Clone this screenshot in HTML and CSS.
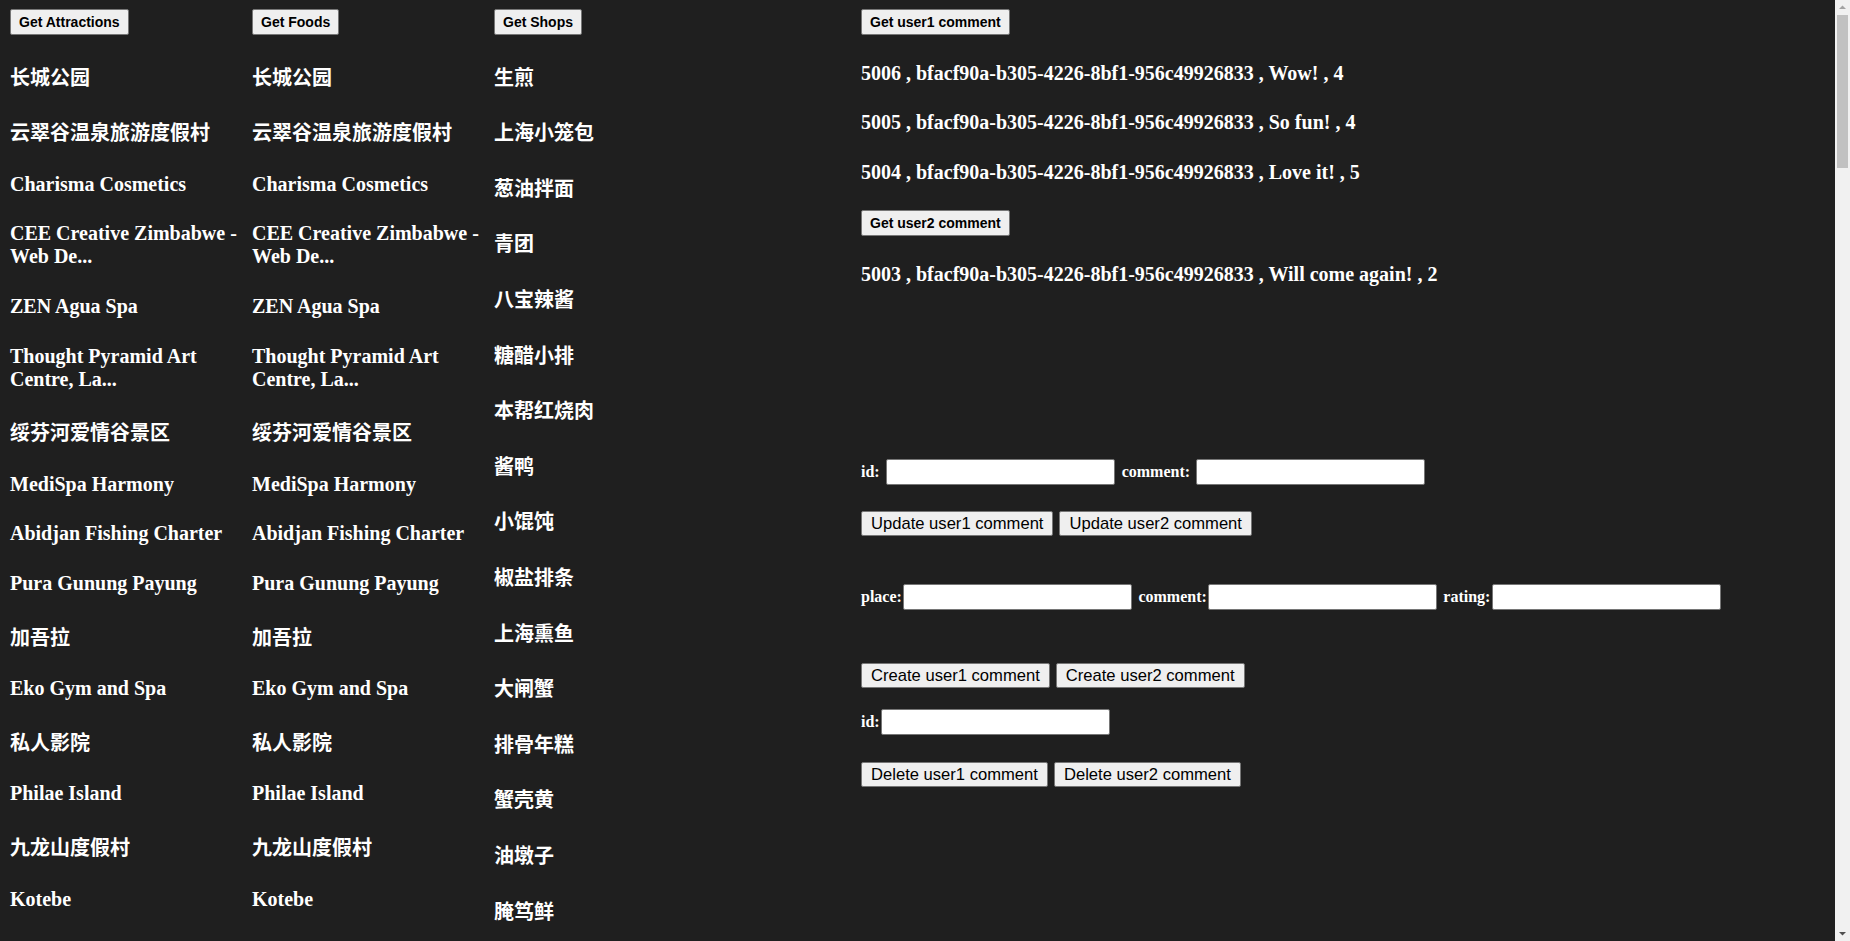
FILE: index.html
```html
<!DOCTYPE html>
<html lang="zh">
<head>
<meta charset="utf-8">
<title>Travel comments</title>
<link rel="stylesheet" href="styles.css">
</head>
<body>
<div class="page">
  <section class="column">
    <div class="bar"><button class="get-btn">Get Attractions</button></div>
    <h4 class="item">长城公园</h4>
    <h4 class="item">云翠谷温泉旅游度假村</h4>
    <h4 class="item">Charisma Cosmetics</h4>
    <h4 class="item">CEE Creative Zimbabwe - Web De...</h4>
    <h4 class="item">ZEN Agua Spa</h4>
    <h4 class="item">Thought Pyramid Art Centre, La...</h4>
    <h4 class="item">绥芬河爱情谷景区</h4>
    <h4 class="item">MediSpa Harmony</h4>
    <h4 class="item">Abidjan Fishing Charter</h4>
    <h4 class="item">Pura Gunung Payung</h4>
    <h4 class="item">加吾拉</h4>
    <h4 class="item">Eko Gym and Spa</h4>
    <h4 class="item">私人影院</h4>
    <h4 class="item">Philae Island</h4>
    <h4 class="item">九龙山度假村</h4>
    <h4 class="item">Kotebe</h4>
  </section>
  <section class="column">
    <div class="bar"><button class="get-btn">Get Foods</button></div>
    <h4 class="item">长城公园</h4>
    <h4 class="item">云翠谷温泉旅游度假村</h4>
    <h4 class="item">Charisma Cosmetics</h4>
    <h4 class="item">CEE Creative Zimbabwe - Web De...</h4>
    <h4 class="item">ZEN Agua Spa</h4>
    <h4 class="item">Thought Pyramid Art Centre, La...</h4>
    <h4 class="item">绥芬河爱情谷景区</h4>
    <h4 class="item">MediSpa Harmony</h4>
    <h4 class="item">Abidjan Fishing Charter</h4>
    <h4 class="item">Pura Gunung Payung</h4>
    <h4 class="item">加吾拉</h4>
    <h4 class="item">Eko Gym and Spa</h4>
    <h4 class="item">私人影院</h4>
    <h4 class="item">Philae Island</h4>
    <h4 class="item">九龙山度假村</h4>
    <h4 class="item">Kotebe</h4>
  </section>
  <section class="column">
    <div class="bar"><button class="get-btn">Get Shops</button></div>
    <h4 class="item">生煎</h4>
    <h4 class="item">上海小笼包</h4>
    <h4 class="item">葱油拌面</h4>
    <h4 class="item">青团</h4>
    <h4 class="item">八宝辣酱</h4>
    <h4 class="item">糖醋小排</h4>
    <h4 class="item">本帮红烧肉</h4>
    <h4 class="item">酱鸭</h4>
    <h4 class="item">小馄饨</h4>
    <h4 class="item">椒盐排条</h4>
    <h4 class="item">上海熏鱼</h4>
    <h4 class="item">大闸蟹</h4>
    <h4 class="item">排骨年糕</h4>
    <h4 class="item">蟹壳黄</h4>
    <h4 class="item">油墩子</h4>
    <h4 class="item">腌笃鲜</h4>
  </section>
  <section class="comments">
    <div class="bar"><button class="get-btn">Get user1 comment</button></div>
    <h4 class="item">5006 , bfacf90a-b305-4226-8bf1-956c49926833 , Wow! , 4</h4>
    <h4 class="item">5005 , bfacf90a-b305-4226-8bf1-956c49926833 , So fun! , 4</h4>
    <h4 class="item">5004 , bfacf90a-b305-4226-8bf1-956c49926833 , Love it! , 5</h4>
    <div class="bar"><button class="get-btn">Get user2 comment</button></div>
    <h4 class="item">5003 , bfacf90a-b305-4226-8bf1-956c49926833 , Will come again! , 2</h4>

    <div class="editor">
      <div class="field-row spaced">
        <label class="lbl">id:</label><input class="txt" type="text">
        <label class="lbl">comment:</label><input class="txt" type="text">
      </div>
      <div class="btn-row after-update-fields">
        <button class="act-btn">Update user1 comment</button>
        <button class="act-btn">Update user2 comment</button>
      </div>
      <div class="field-row tight after-update-btns">
        <label class="lbl">place:</label><input class="txt" type="text">
        <label class="lbl">comment:</label><input class="txt" type="text">
        <label class="lbl">rating:</label><input class="txt" type="text">
      </div>
      <div class="btn-row after-create-fields">
        <button class="act-btn">Create user1 comment</button>
        <button class="act-btn">Create user2 comment</button>
      </div>
      <div class="field-row tight after-create-btns">
        <label class="lbl">id:</label><input class="txt" type="text">
      </div>
      <div class="btn-row after-delete-field">
        <button class="act-btn">Delete user1 comment</button>
        <button class="act-btn">Delete user2 comment</button>
      </div>
    </div>
  </section>
</div>
<div class="scrollbar" aria-hidden="true">
  <svg class="sb-arrow" width="15" height="15" viewBox="0 0 15 15"><path d="M4 9h7L7.5 5.5z" fill="#a3a3a3"/></svg>
  <div class="sb-track"><div class="sb-thumb"></div></div>
  <svg class="sb-arrow" width="15" height="15" viewBox="0 0 15 15"><path d="M4 6h7L7.5 9.5z" fill="#505050"/></svg>
</div>
</body>
</html>
```
FILE: styles.css
```css
html, body {
  margin: 0;
  padding: 0;
  background: #1f1f1f;
}

body {
  color: #ffffff;
  font-family: "Liberation Serif", "Noto Sans CJK SC", serif;
}

.page {
  display: grid;
  grid-template-columns: 242px 242px 367px 1fr;
  align-items: start;
  padding: 9px 15px 0 10px;
  min-height: 5600px;
  box-sizing: border-box;
}

.column,
.comments {
  min-width: 0;
}

.bar {
  display: flex;
  height: 26px;
}

.get-btn {
  font-family: "Liberation Sans", Arial, sans-serif;
  font-weight: bold;
  font-size: 14px;
  line-height: 16px;
  color: #000;
  background: #efefef;
  border: 1px solid #767676;
  border-radius: 2px;
  padding: 4px 8px;
  height: 26px;
  box-sizing: border-box;
  margin: 0;
}

.item {
  font-family: "Liberation Serif", "Noto Sans CJK SC", serif;
  font-weight: bold;
  font-size: 20px;
  line-height: normal;
  margin: 26.6px 0;
  color: #ffffff;
}

.editor {
  padding-top: 146px;
}

.field-row {
  display: flex;
  align-items: center;
  height: 26px;
}

.lbl {
  font-family: "Liberation Serif", serif;
  font-weight: bold;
  font-size: 16px;
  color: #ffffff;
}

.txt {
  width: 229px;
  height: 26px;
  box-sizing: border-box;
  border: 1px solid #767676;
  border-radius: 2px;
  background: #ffffff;
  margin: 0;
  padding: 1px 2px;
  font-size: 13px;
}

.spaced .txt {
  margin-left: 6px;
  margin-right: 7px;
}

.tight .txt {
  margin-left: 1.5px;
  margin-right: 6px;
}

.btn-row {
  display: flex;
  gap: 6px;
}

.act-btn {
  font-family: "Liberation Sans", Arial, sans-serif;
  font-size: 16.6px;
  line-height: 19px;
  color: #000;
  background: #efefef;
  border: 1px solid #767676;
  border-radius: 2px;
  padding: 2px 9px;
  height: 25px;
  box-sizing: border-box;
  margin: 0;
}

.after-update-fields { margin-top: 26px; }
.after-update-btns { margin-top: 48px; }
.after-create-fields { margin-top: 53px; }
.after-create-btns { margin-top: 21px; }
.after-delete-field { margin-top: 27px; }

/* classic light page scrollbar drawn over the right edge */
.scrollbar {
  position: fixed;
  top: 0;
  right: 0;
  width: 15px;
  height: 100vh;
  background: #f1f1f1;
  display: flex;
  flex-direction: column;
}

.sb-arrow {
  display: block;
  flex: none;
}

.sb-track {
  flex: 1;
  padding: 0 2px;
}

.sb-thumb {
  height: 153px;
  background: #c1c1c1;
}
```
